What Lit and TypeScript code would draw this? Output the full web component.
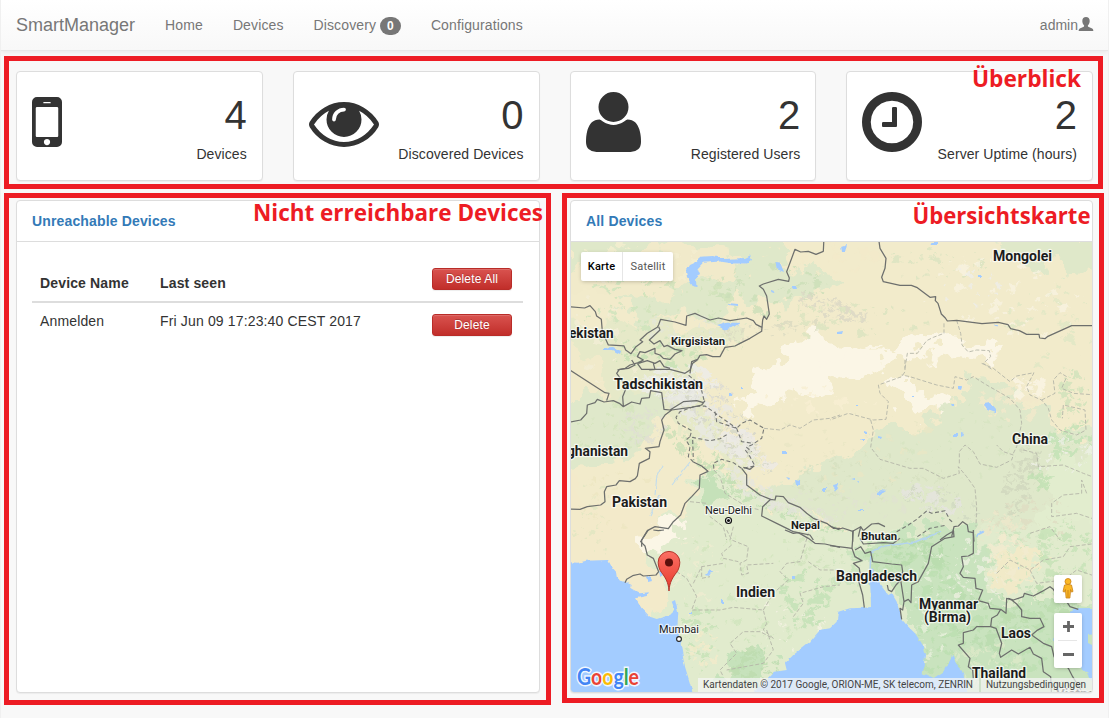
import { LitElement, html, svg, css } from "lit";
import { customElement, property } from "lit/decorators.js";

type Label = [text: string, x: number, y: number, width: number, size: number, weight: number];
type Patch = [cx: number, cy: number, rx: number, ry: number, count: number, size: number, color: string, angle?: number];

const labels: Label[] = [
  ["Mongolei", 993, 261, 59, 14, 700],
  ["ekistan", 569, 338, 44.5, 14, 700],
  ["Kirgisistan", 671, 345, 54, 11, 700],
  ["Tadschikistan", 614, 389, 89, 14, 700],
  ["ghanistan", 567, 456, 61, 14, 700],
  ["Pakistan", 612, 507, 55, 14, 700],
  ["Neu-Delhi", 705, 514, 47, 11.5, 400],
  ["Nepal", 791, 529, 29, 11, 700],
  ["China", 1012, 444, 36, 14, 700],
  ["Bhutan", 861, 540, 36, 11, 700],
  ["Bangladesch", 836, 581, 81, 14, 700],
  ["Indien", 736, 597, 39, 14, 700],
  ["Mumbai", 659, 633, 40, 11.5, 400],
  ["Myanmar", 919, 609, 59, 14, 700],
  ["(Birma)", 924, 622, 47, 14, 700],
  ["Laos", 1001, 638, 30, 14, 700],
  ["Thailand", 972, 678, 54, 14, 700],
  ["Vietnam", 1056, 698, 50, 13, 700],
];

/* Soft land cover areas, drawn under the small patches. */
const areas: [string, string][] = [
  ["#dfe8c9", "M560 230H792L786 262 760 268 745 285 730 300 720 318 690 312 660 322 640 322 622 308 600 280 560 262Z"],
  ["#f1eaca", "M560 262L600 268 630 262 660 240 700 250 745 256 735 275 690 280 660 302 620 300 560 290Z"],
  ["#dfe8c9", "M985 230H1110V268L1060 272 1020 262Z"],
  ["#dfe8c9", "M735 280L760 262 800 268 840 280 800 302 750 305Z"],
  ["#e6e9c8", "M560 325L640 320 700 330 745 318 735 340 700 350 690 380 720 420 760 460 740 480 700 440 660 410 640 430 620 440 560 440Z"],
  ["#dfe8ca", "M560 392L660 395 650 430 630 455 600 465 560 470Z"],
  ["#f1eaca", "M560 345L600 355 610 385 590 400 560 400Z"],
  ["#fbf6e6", "M735 400L752 385 745 370 775 358 800 352 830 356 852 350 880 345 900 348 885 362 862 376 840 380 812 394 790 398 760 410 745 412Z"],
  ["#fbf6e6", "M790 342L815 335 860 345 880 340 870 352 820 362 785 362Z"],
  ["#fbf6e6", "M882 383L900 378 920 378 928 392 945 400 968 412 950 422 930 412 905 405Z"],
  ["#fbf6e6", "M895 345L915 335 960 340 985 335 1000 352 960 360 930 355 905 360Z"],
  ["#dfe8ca", "M765 505L775 480 830 462 870 440 890 430 930 425 955 400 970 375 1010 390 1025 410 1050 410 1060 430 1110 440V560H960L940 530 900 535 830 525Z"],
  ["#e1ebcd", "M640 540L665 515 690 505 700 470 715 470 760 500 830 530 960 530 1110 520V705H560V650L640 640 650 560Z"],
  ["#e2edce", "M1050 460L1110 450V520L1040 530 1045 500Z"],
  ["#c9e3be", "M860 540L940 528 975 520 980 560 1000 600 1050 600 1110 605V705H920L905 600 880 575 850 560Z"],
  ["#f1eac8", "M998 545L1030 540 1045 560 1030 585 1005 590 990 570Z"],
  ["#f3eaca", "M560 480L600 500 650 500 665 520 640 545 655 575 672 600 672 612 650 618 625 600 600 600 560 600Z"],
  ["#fbf6e6", "M640 540L655 530 680 515 690 520 680 532 655 552 643 552Z"],
  ["#c5e1b9", "M700 480L712 470 720 500 708 503Z"],
  ["#c6e2bb", "M730 660L760 650 775 665 760 685 735 692 720 680Z"],
];

const patches: Patch[] = [
  [640, 262, 70, 20, 40, 5, "#f4edcf"],
  [680, 300, 70, 24, 40, 4, "#cfe2b9"],
  [615, 310, 40, 34, 40, 4, "#cde3bb"],
  [605, 335, 38, 60, 34, 5, "#f3edd6"],
  [820, 258, 60, 16, 40, 5, "#f2eac9"],
  [770, 290, 60, 28, 50, 4, "#cbdfb8"],
  [830, 308, 40, 9, 90, 3, "#d9d7c4", 18],
  [770, 330, 60, 7, 70, 3, "#d9d9c0", -8],
  [930, 265, 60, 16, 50, 3, "#d9e4c0"],
  [985, 290, 70, 34, 30, 6, "#f8f2e0"],
  [970, 285, 30, 22, 16, 4.5, "#eeede8"],
  [1050, 330, 45, 45, 36, 5, "#dfe7c4"],
  [1040, 310, 50, 30, 24, 5, "#f8f3e0"],
  [850, 320, 80, 18, 50, 3.5, "#d9e3bf"],
  [690, 328, 50, 14, 70, 3, "#e4e6d8"],
  [660, 352, 50, 16, 50, 4, "#c6e1b4"],
  [700, 345, 46, 14, 60, 3, "#d3e2bd"],
  [680, 382, 38, 18, 130, 5, "#ececea"],
  [695, 395, 36, 18, 90, 3, "#dadad4"],
  [712, 420, 50, 20, 170, 5, "#e9e8e4", 38],
  [720, 420, 50, 20, 90, 2.6, "#d3d4c9", 38],
  [745, 450, 36, 14, 100, 4, "#eceae6", 40],
  [745, 450, 36, 14, 60, 2.4, "#d3d6c6", 40],
  [645, 425, 25, 18, 90, 3, "#dedfd2"],
  [610, 430, 36, 30, 60, 3.5, "#d3e4bc"],
  [700, 455, 45, 12, 80, 3.5, "#c9e0b7", 40],
  [735, 485, 34, 10, 80, 3, "#c2deb3", 35],
  [755, 488, 34, 10, 110, 3.4, "#e6e6dd", 35],
  [800, 518, 46, 6, 70, 3, "#c2deb3", 18],
  [800, 509, 40, 8, 90, 3, "#e3e4dc", 18],
  [620, 500, 44, 28, 24, 4, "#ece6c0"],
  [595, 520, 22, 40, 30, 3, "#e0e6c0"],
  [820, 400, 60, 14, 20, 5, "#f7efd2"],
  [850, 450, 90, 40, 60, 4, "#e9e6c4"],
  [870, 480, 80, 28, 120, 2.6, "#d6e0bf"],
  [840, 505, 70, 16, 90, 3, "#e0e2d0"],
  [935, 498, 34, 13, 90, 4, "#e5e3de", 18],
  [940, 502, 40, 14, 50, 3, "#cfd8c0", 15],
  [960, 440, 60, 40, 70, 3, "#d6e3c1"],
  [1010, 400, 30, 22, 40, 5, "#f1e9cb"],
  [1030, 388, 16, 14, 14, 6, "#faf5e5"],
  [1075, 400, 18, 30, 40, 5, "#cee2ba"],
  [1022, 480, 16, 38, 130, 3, "#cfd6bd", 15],
  [1070, 440, 26, 16, 50, 5, "#c0e1b4"],
  [1045, 480, 12, 12, 16, 6, "#bfe0b2"],
  [1062, 455, 34, 20, 40, 3, "#eef0e6"],
  [1030, 520, 50, 24, 80, 3.4, "#dfdcc2"],
  [1005, 530, 28, 20, 50, 4, "#eee7cb"],
  [1020, 560, 36, 32, 60, 4, "#c9e3bb"],
  [1012, 560, 26, 24, 50, 4.5, "#f3ebd0"],
  [1065, 550, 28, 32, 80, 4.5, "#c5e2b7"],
  [735, 555, 60, 34, 45, 3, "#d2e5bd"],
  [690, 575, 30, 40, 40, 3.2, "#efecd1"],
  [740, 620, 60, 40, 60, 3.5, "#d0e5bd"],
  [700, 640, 18, 34, 45, 4.4, "#c5e2b7"],
  [705, 650, 14, 24, 20, 5, "#f2ebcb"],
  [755, 667, 24, 20, 50, 5, "#bddcaf"],
  [805, 600, 26, 30, 60, 5, "#c2e1b5"],
  [790, 620, 40, 30, 40, 2.4, "#f5f2e4"],
  [850, 572, 26, 22, 40, 4, "#c9e4bc"],
  [815, 555, 30, 18, 40, 3, "#cfe4bc"],
  [890, 555, 32, 16, 60, 4, "#bddeb0"],
  [925, 550, 30, 18, 70, 5, "#b7dbab"],
  [940, 620, 24, 60, 80, 5, "#bcdfb0"],
  [930, 600, 26, 60, 60, 2.8, "#e8f0dc"],
  [975, 575, 26, 36, 70, 3.4, "#ecefe0"],
  [985, 620, 40, 30, 70, 5, "#b9dbae"],
  [1010, 640, 40, 36, 80, 5, "#bddfb1"],
  [985, 665, 36, 22, 60, 4, "#dde9c8"],
  [1040, 610, 40, 20, 50, 5, "#bbdcae"],
];

const waters: string[] = [
  "M560 561.700L578 562.700 585 560.700 608 560 611.700 566.700 616 571.700 616.700 576.700 620 580.700 625 581.700 631.700 585 630.700 588.300 640 593.300 649 592.300 646.700 596 635 598.300 641.700 608.300 650 616.700 656.700 619 670 615 675 610 671.700 601.700 675 600 678.300 613.300 677.300 626.700 680 640 685 666.700 690 683.300 694.500 700H560Z",
  "M747 700L770 676.700 775 671.700 786.700 670 785 663.300 793.300 655 810 641.700 820 630 830 628.300 836.700 621.700 838.300 611.700 850 608.300 864.300 607.700 871 607 870.700 593.300 869.300 571 872.500 568 876.700 580 888.300 595 891.700 593.300 896.700 601.700 901.700 619.300 908.300 626.700 915 633.300 921.700 643.300 925 655 922.700 673.300 933.300 678.300 943.300 671.700 952.500 655 956 663.300 963 671 966 680 968 700Z",
  "M1105 608L1078 608.300 1070 611.700 1063 623 1053 640 1063 653 1087 673 1093 684 1105 684Z",
  "M693 286.500L687 277 686 271.700 690 265 697 261.700 700 256.700 713 256 723 259 745 258 750 255.500 752 260 747 263.500 733 263.500 720 261.500 703 262.700 697.500 268.500 700 275 696 277.500 696.500 287Z",
  "M717 326L727 322.700 740 322.700 733 327.500 725 329.500Z",
  "M775.500 262L780 262.500 784 272 776.500 269Z",
  "M791 286h5l1 3h-4zM772 290l3 1-1 2-3-1zM728 303l10 1v2l-9-1zM602 348l11-1 8 4-1 3-8-4-10 0z",
  "M841 246l6-2-2 8-3 0zM837 332l6-1-1 3-5 0zM931 242h8v2h-7zM978 275h3v2h-3zM994 325l4 0-1 2z",
  "M985 404l6-1 5 6 0 4-4-1-6-2zM958 386h4l-1 3-3-1zM954 434h4v2h-4zM961 433l3 1-1 3-2-1zM912 396h2v1h-2zM951 404h3v2h-2z",
  "M877 493l5-3 4 1-6 4-3 0zM833 488l3-4 2 0-1 4-2 3zM850 479l4-1 0 2zM857 481l3 0-1 2zM861 439h4v1l-3 0zM864 430l3 1v2h-3zM878 436l4 1-1 2-3-1zM856 404h2v2h-2zM857 510h8v1h-8z",
  "M795 480l5 1 0 4-4 0zM833 485l5-1-3 8zM823 488h3v4h-3zM786 478l4 1-1 2zM730 394h3v3h-3zM740 387h2v2h-2zM782 452h4v2h-4z",
  "M645 577l6-2 1 7-4 1zM706 575l4-5 2 1-3 5zM721 599h3v5h-3zM689 612h3v2h-3zM659 572l2-1 2 4-3 2zM792 576h2v3h-2zM1017 567l2 1-1 2z",
  "M975 537l2-4 7-4 1 2-6 3-2 3z",
];

type Trace = [x: number, y: number, d: string];
/* Outlines are traced on tiles at three units to the pixel. */
const borders: Trace[] = [
  [560, 190, "M20 350L74 354 90 347 106 365 110 378 124 388 127 425 145 465 192 468 197 480 213 491 228 470 248 455 240 450 262 430 292 412 296 404 302 388 345 396 378 406 380 378 405 370 422 378 450 390 475 384 510 392 560 384 580 392 588 403 606 412 605 424 570 445 540 460 525 468 495 472 480 500 458 500 440 494 420 496 413 508 395 515 390 550M606 412L608 390 612 378 620 388 628 372 620 318 610 298 598 288 610 282 655 268 686 274 688 264 680 245 705 178 722 186 745 184 768 193 790 184 792 140M296 410L300 420 268 450 282 462 300 452 312 470 322 466 345 478 366 482 345 492 330 508 310 505 300 495 285 490 285 475 255 488 240 485 232 500 250 510 235 518 210 525 196 535 172 540M235 520L262 512 285 520 300 512 312 530 330 535M280 520L285 538 268 540"],
  [830, 190, "M145 140L150 175 168 205 165 235 155 262 160 275 210 286 244 286 262 293 300 322 317 320 316 332 324 340 334 372 346 384 352 393 380 391 456 401 505 397 534 404 542 416 568 422 590 433 627 433 629 444 645 446 652 440 725 407 800 407"],
  [560, 360, "M20 24L135 98 147 100 140 122M20 188L62 180 80 160 82 135 105 128 112 118 132 126 160 122 178 130 190 140 215 126 240 132 245 115 268 113 272 92 305 98 312 148 330 150 370 125 410 122 430 128M435 122L425 135 395 142 370 145 335 150 315 165 305 180 312 210 300 245 297 260 256 265 270 275 268 295 238 310 232 348 226 356 210 365 178 362 168 375 140 380 133 395 135 425 122 435 82 440 60 448 20 447M190 138L188 110 200 80 170 40 178 28 205 25 225 15 215 0M232 10L245 28 300 28 330 28 375 40 390 30 398 10 412 0M245 560L245 540 262 512 285 500 325 506 340 485 362 465 375 430 395 410 418 385 420 345 444 334 425 318 400 306M545 325L560 345 560 375 600 405 632 418 608 440 605 468 650 490 700 515 725 520 750 525 760 540M632 418L645 420 648 408 670 410 685 428 720 442 740 460 760 475 800 490 820 505 840 505M550 322L570 328 582 318"],
  [830, 360, "M0 498L25 508 38 504 68 514 92 500 100 512 125 492 145 490 165 500 M68 514V545M92 500L85 530M365 530L372 500 385 498 398 485 412 495 415 515 430 518 432 545M372 512L350 525 330 540"],
  [560, 530, "M265 0L242 35 255 48 262 75 280 85 296 125 288 135 250 138 240 132 218 137 200 148 195 158M280 0L295 2 312 0M675 0L700 10 715 8 745 25 765 40 795 42 840 52"],
  [830, 530, "M0 47L50 53 66 55 70 0M90 25L100 42 160 38 190 40 210 25M66 55L75 80 96 92 70 100 88 115 90 130 85 150 98 195 103 233M75 60L92 50 105 70 122 65 128 95 185 102 215 105 218 125 212 150M172 165L175 180 185 185 198 165 212 150 222 215 235 208 243 218 245 165 265 155 270 145 295 100 305 50 345 25 372 20 370 0M222 215L218 240 210 235 215 268M430 0L430 70 415 78 395 80 400 110 390 130 400 142 435 145 438 175 458 180 445 212 475 220 480 235 512 238 502 255 485 265 482 290 440 290 430 300 400 308 400 340 385 345 420 385 415 410 428 420 430 445M512 238L528 250 530 205 545 210 560 222 575 240 575 260 600 265 630 265 642 290 620 302 605 315 640 340 665 350 672 380 715 415 728 440 765 500M535 205L550 210 580 200 583 190 610 198 635 185 660 170 670 178 680 195 710 215 720 230 745 238M482 290L498 295 515 340 508 370 512 382 545 360 565 372 600 352 610 372 635 385 640 425 662 440 665 500"],
];

const disputed: Trace[] = [
  [560, 360, "M432 120L425 92 405 62 385 45M400 306L385 290 390 260 378 240 390 230 410 235 450 242 480 236 500 224M390 230L395 212 355 190 348 172 360 155 400 140 435 138 460 155 480 170 530 205 M465 155L470 185 530 205 545 190 570 180 612 205 605 235 575 255 560 262 575 275M530 205L545 245 580 250M556 270L570 290 585 318 545 325 520 308 485 298 460 310 462 330M398 240L400 300"],
  [830, 360, "M200 515L235 495 260 478 290 453 305 460 345 452 360 480 372 490M262 530L300 505 350 495"],
];

const provinces: Trace[] = [
  [830, 190, "M342 400L342 430 310 442 290 452 262 490 232 490 224 540M380 391L392 430 396 465 415 486 440 480 478 482 482 500 460 520 488 540"],
  [560, 360, "M612 205L660 210 690 195 720 205 760 180 810 175 840 165M462 330L480 350 495 400 560 440 600 450M390 425L440 430 450 470 490 500 500 540M520 500L510 540"],
  [830, 360, "M225 0L225 35 215 50 145 75 150 100 175 125 168 178 130 180 55 160 0 180M122 180L130 210 122 262 150 298 240 325 280 325 340 355 388 340 385 320 410 350 435 385 440 440 438 500M388 310L388 275 405 255 430 275 450 312 500 322 545 300 550 285 520 275 500 255M550 280L560 260 575 190 570 150 540 115 470 75 430 50 410 60 375 50 370 85 320 75 240 50 215 45M455 10L490 25 540 65 560 48 612 38 590 80 600 105 635 120 655 145 665 180 690 210 740 225 768 210 765 150 700 135 697 175M635 120L675 100 670 60 690 38 710 50 695 85 730 100 800 105M580 270L620 280 625 320 700 315 760 340 800 355M770 400L755 360 755 400 700 405 665 430 665 470 740 460 800 480M600 520L660 500 690 540"],
  [560, 530, "M500 0L515 30 565 50 560 90 540 100 545 135 565 130 560 105 640 100M515 45L485 70 490 85 535 95M350 125L380 145 400 180 410 200 395 240 480 240 520 232 610 240 620 280 610 300 640 325 600 305 550 305 510 340 530 370 480 420 490 440M610 240L640 190 685 150 660 125 680 100 720 95 745 10M400 160L425 110 490 100M425 110V145L450 140M620 300L640 360 610 400 500 420M745 95L780 120 830 120M700 260L730 220 720 190 790 170 840 165"],
  [830, 530, "M500 130L540 90 600 120 640 90 700 80 720 50 800 40M600 120L620 160 700 150 740 120 800 140"],
];

/* Small deterministic generator so that the terrain is the same on every load. */
function randomFrom(seed: number) {
  let s = seed;
  return () => {
    s = (s * 1664525 + 1013904223) >>> 0;
    return s / 4294967296;
  };
}

function patchPath([cx, cy, rx, ry, count, size, , angle = 0]: Patch, seed: number): string {
  const rnd = randomFrom(seed * 7919 + 17);
  const a = (angle * Math.PI) / 180;
  let d = "";
  for (let i = 0; i < count; i++) {
    const t = rnd() * Math.PI * 2;
    const r = Math.sqrt(rnd());
    const ex = Math.cos(t) * r * rx;
    const ey = Math.sin(t) * r * ry;
    const x = cx + ex * Math.cos(a) - ey * Math.sin(a);
    const y = cy + ex * Math.sin(a) + ey * Math.cos(a);
    const scale = size * (0.2 + rnd() * rnd() * 1.3);
    const points: string[] = [];
    for (let k = 0; k < 7; k++) {
      const u = (k / 7) * Math.PI * 2;
      const q = scale * (0.3 + rnd() * 0.9);
      points.push(`${(x + Math.cos(u) * q * 1.2).toFixed(1)} ${(y + Math.sin(u) * q * 0.9).toFixed(1)}`);
    }
    d += `M${points.join("L")}Z`;
  }
  return d;
}

const traces = (items: Trace[], name: string) =>
  items.map(([x, y, d]) => svg`<path class=${name} transform="translate(${x} ${y}) scale(.33333)" d=${d}></path>`);

/* Roughens the outlines of whatever it is applied to. */
const roughen = (id: string, frequency: number, scale: number, octaves: number) => svg`
  <filter id=${id} filterUnits="userSpaceOnUse" x="560" y="230" width="545" height="475" color-interpolation-filters="sRGB">
    <feTurbulence type="fractalNoise" baseFrequency=${frequency} numOctaves=${octaves} seed="4" result="noise"></feTurbulence>
    <feDisplacementMap in="SourceGraphic" in2="noise" scale=${scale} xChannelSelector="R" yChannelSelector="G"></feDisplacementMap>
  </filter>`;

@customElement("device-map")
class DeviceMap extends LitElement {
  static styles = css`
    :host { display: block; position: relative; overflow: hidden; height: 450px; font-family: Roboto, sans-serif; }
    .terrain { display: block; width: 100%; height: 100%; }
    .border, .disputed, .province { fill: none; vector-effect: non-scaling-stroke; stroke-linejoin: round; }
    .border { stroke: #6d6f6d; stroke-width: 1.25; }
    .disputed { stroke: #777976; stroke-width: 1.1; stroke-dasharray: 4 2.5; }
    .province { stroke: #b4b5a8; stroke-width: .9; stroke-dasharray: 4 2; }
    .label { fill: #1c1c1c; stroke: #fff; stroke-opacity: .7; stroke-width: 2.4px; paint-order: stroke; stroke-linejoin: round; }
    .logo { font-size: 22px; font-weight: 700; stroke: #fff; stroke-opacity: .85; stroke-width: 3px; paint-order: stroke; font-family: Lato, sans-serif; }
    .types { position: absolute; left: 10px; top: 10px; display: flex; height: 29px; line-height: 29px; font-size: 11px; background: #fff; border-radius: 2px; box-shadow: 0 1px 4px -1px rgba(0,0,0,.3); }
    .type { box-sizing: border-box; width: 50px; text-align: center; color: #565656; letter-spacing: .15px; }
    .type.active { width: 42px; color: #000; font-weight: 500; border-right: 1px solid #e6e6e6; }
    .controls { position: absolute; right: 10px; bottom: 24px; display: flex; flex-direction: column; gap: 10px; width: 28px; }
    .control { display: flex; flex-direction: column; align-items: center; background: #fff; border-radius: 2px; box-shadow: 0 1px 4px -1px rgba(0,0,0,.3); }
    .control svg { display: block; }
    .legal { position: absolute; right: 0; bottom: 0; display: flex; height: 14px; background: rgba(245,245,245,.72); }
    .legal svg { display: block; font-size: 10px; fill: #444; }
  `;

  render() {
    return html`
      <svg class="terrain" viewBox="571 242 521 450">
        <defs>
          <linearGradient id="pin" x1="0" y1="0" x2="0" y2="1">
            <stop offset="0" stop-color="#fb7064"></stop><stop offset="1" stop-color="#e8382c"></stop>
          </linearGradient>
          ${roughen("coarse", 0.045, 44, 4)} ${roughen("medium", 0.12, 9, 3)} ${roughen("fine", 0.14, 4, 2)}
        </defs>
        <rect x="560" y="230" width="545" height="475" fill="#f2ebcb"></rect>
        <g filter="url(#coarse)">${areas.map(([fill, d]) => svg`<path fill=${fill} d=${d}></path>`)}</g>
        <g filter="url(#medium)">${patches.map((p, i) => svg`<path fill=${p[6]} fill-opacity=".8" d=${patchPath(p, i + 1)}></path>`)}</g>
        <g filter="url(#fine)">
          ${waters.map((d) => svg`<path fill="#a3ccff" d=${d}></path>`)}
          <path d="M870 572L871 552 885 546 915 542 940 532" fill="none" stroke="#b4d4ee" stroke-width="1.600"></path>
          <path d="M655 495L657 475 662 465M672 485L690 462M650 516L660 495" fill="none" stroke="#c2dcec" stroke-width="1.100"></path>
          <path d="M1088 634l8-1v14l-8-4z" fill="#c9e3be"></path>
        </g>
        ${traces(provinces, "province")} ${traces(disputed, "disputed")} ${traces(borders, "border")}
        ${labels.map(([text, x, y, width, size, weight]) => svg`<text class="label" x=${x} y=${y} textLength=${width}
          lengthAdjust="spacingAndGlyphs" font-size=${size} font-weight=${weight}>${text}</text>`)}
        <circle cx="728.500" cy="520.500" r="3" fill="#fff" stroke="#111" stroke-width="1.200"></circle>
        <circle cx="728.500" cy="520.500" r="1.500" fill="#111"></circle>
        <circle cx="679" cy="639" r="2.400" fill="#fff" stroke="#222" stroke-width="1.100"></circle>
        <path d="M669 591C668.500 582 665 577 661.500 572.500 659.500 570 658.200 566 658.200 562.200a10.800 10.800 0 0 1 21.600 0C679.800 566 678.500 570 676.500 572.500 673 577 669.500 582 669 591Z" fill="url(#pin)" stroke="#b3352b" stroke-width="1"></path>
        <circle cx="669" cy="562.500" r="4" fill="#5c100c"></circle>
        <text class="logo" x="577" y="685" textLength="62" lengthAdjust="spacingAndGlyphs"><tspan fill="#4285f4">G</tspan><tspan fill="#ea4335">o</tspan><tspan fill="#fbbc05">o</tspan><tspan fill="#4285f4">g</tspan><tspan fill="#34a853">l</tspan><tspan fill="#ea4335">e</tspan></text>
      </svg>
      <div class="types"><div class="type active">Karte</div><div class="type">Satellit</div></div>
      <div class="controls">
        <div class="control">
          <svg width="28" height="28" viewBox="0 0 28 28">
            <path d="M10.500 10q3.500-1.200 7 0l1.500 6.500-1.500.6-.9-2.600-.7 8.500h-3.800l-.7-8.500-.9 2.600-1.500-.6Z" fill="#fbb825" stroke="#c98014" stroke-width=".8"></path>
            <path d="M14 15v7.500" stroke="#c98014" stroke-width=".9"></path>
            <circle cx="14" cy="6.500" r="3" fill="#fbb825" stroke="#c98014" stroke-width=".8"></circle>
          </svg>
        </div>
        <div class="control">
          <svg width="28" height="55" viewBox="0 0 28 55">
            <path d="M9 13.500h11M14.500 8v11M9 41.500h11" stroke="#666" stroke-width="2.800"></path>
            <path d="M4 27.500h19" stroke="#e6e6e6"></path>
          </svg>
        </div>
      </div>
      <div class="legal">
        <svg width="394" height="14" viewBox="698 0 394 14">
          <text x="703" y="10" textLength="270" lengthAdjust="spacingAndGlyphs">Kartendaten © 2017 Google, ORION-ME, SK telecom, ZENRIN</text>
          <path d="M980 0v14" stroke="#a8c9a0" stroke-opacity=".8"></path>
          <text x="986" y="10" textLength="100" lengthAdjust="spacingAndGlyphs">Nutzungsbedingungen</text>
        </svg>
      </div>`;
  }
}

const icons = {
  mobile: { box: "512 0 768 1792", width: 30, d: "M976 1408q0-33-23.500-56.500t-56.500-23.500-56.500 23.500-23.500 56.500 23.500 56.500 56.500 23.500 56.500-23.500 23.500-56.500zm208-160v-704q0-13-9.500-22.500t-22.500-9.500h-512q-13 0-22.500 9.500t-9.500 22.500v704q0 13 9.500 22.500t22.500 9.500h512q13 0 22.500-9.500t9.500-22.500zm-192-848q0-16-16-16h-160q-16 0-16 16t16 16h160q16 0 16-16zm288-16v1024q0 52-38 90t-90 38h-512q-52 0-90-38t-38-90v-1024q0-52 38-90t90-38h512q52 0 90 38t38 90z" },
  eye: { box: "0 0 1792 1792", width: 70, d: "M1664 960q-152-236-381-353 61 104 61 225 0 185-131.500 316.500t-316.500 131.500-316.500-131.500-131.500-316.500q0-121 61-225-229 117-381 353 133 205 333.500 326.500t434.500 121.500 434.500-121.500 333.500-326.500zm-720-384q0-20-14-34t-34-14q-125 0-214.500 89.500t-89.500 214.500q0 20 14 34t34 14 34-14 14-34q0-86 61-147t147-61q20 0 34-14t14-34zm848 384q0 34-20 69-140 230-376.500 368.500t-499.500 138.500-499.500-139-376.500-368q-20-35-20-69t20-69q140-229 376.500-368t499.500-139 499.500 139 376.500 368q20 35 20 69z" },
  user: { box: "0 0 1408 1792", width: 55, d: "M1408 1405q0 120-73 189.500t-194 69.500H267q-121 0-194-69.500T0 1405q0-53 3.500-103.500t14-109T44 1084t43-97.500 62-81 85.500-53.500T346 832q9 0 42 21.500t74.500 48 108 48T704 971t133.500-21.500 108-48 74.500-48 42-21.500q61 0 111.500 20t85.500 53.500 62 81 43 97.500 26.500 108.500 14 109 3.500 103.500zm-320-893q0 159-112.500 271.500T704 896 432.500 783.500 320 512t112.500-271.500T704 128t271.500 112.500T1088 512z" },
  clock: { box: "128 0 1536 1792", width: 60, d: "M1024 544v448q0 14-9 23t-23 9h-320q-14 0-23-9t-9-23v-64q0-14 9-23t23-9h224v-352q0-14 9-23t23-9h64q14 0 23 9t9 23zm416 352q0-148-73-273t-198-198-273-73-273 73-198 198-73 273 73 273 198 198 273 73 273-73 198-198 73-273zm224 0q0 209-103 385.500t-279.500 279.500-385.500 103-385.500-103-279.500-279.500-103-385.500 103-385.500 279.500-279.500 385.500-103 385.500 103 279.500 279.500 103 385.500z" },
};

@customElement("stat-card")
class StatCard extends LitElement {
  @property() icon: keyof typeof icons = "mobile";
  @property() value = "";
  @property() label = "";

  static styles = css`
    :host { box-sizing: border-box; display: flex; justify-content: space-between; height: 109.5px; padding: 15px; border: 1px solid #ddd; border-radius: 4px; background: #fff; box-shadow: 0 1px 1px rgba(0,0,0,.05); }
    .icon { display: block; flex: none; fill: #333; }
    .text { text-align: right; white-space: nowrap; }
    .value { height: 57px; font-size: 40px; line-height: 57px; }
    .label { line-height: 20px; letter-spacing: .08px; }
  `;

  render() {
    const icon = icons[this.icon];
    return html`
      <svg class="icon" width=${icon.width} height="70" viewBox=${icon.box}><path d=${icon.d}></path></svg>
      <div class="text"><div class="value">${this.value}</div><div class="label">${this.label}</div></div>`;
  }
}

@customElement("app-root")
class AppRoot extends LitElement {
  static styles = css`
    :host { display: block; position: relative; box-sizing: border-box; height: 718px; overflow: hidden; border: solid #f0f0f0; border-width: 0 1px; background: #f8f8f8; color: #333; font: 14px/20px "Liberation Sans", Arial, sans-serif; }
    .navbar { box-sizing: border-box; display: flex; height: 51px; padding: 0 14px 0 15px; color: #777; background: linear-gradient(#fff, #f8f8f8); border-bottom: 1px solid #e7e7e7; box-shadow: 0 1px 5px rgba(0,0,0,.075); }
    .brand { padding: 15px 15px 15px 0; font-size: 18px; }
    .item { padding: 15px; letter-spacing: .12px; }
    .badge { display: inline-block; padding: 3px 7px; border-radius: 10px; background: #777; color: #fff; font-size: 12px; font-weight: 700; line-height: 12px; }
    .account { display: flex; margin-left: auto; padding-top: 15px; }
    .account svg { margin-top: 2px; fill: #777; }
    .stats { display: grid; grid-template-columns: repeat(4, 1fr); gap: 30px; padding: 20px 15px 0; }
    .panels { display: grid; grid-template-columns: 524px 523px; gap: 30px; padding: 19.5px 15px 0; }
    .panel { box-sizing: border-box; height: 493px; overflow: hidden; border: 1px solid #ddd; border-radius: 4px; background: #fff; box-shadow: 0 1px 1px rgba(0,0,0,.05); }
    .heading { height: 20px; padding: 10px 15px; border-bottom: 1px solid #ddd; color: #337ab7; font-weight: 700; letter-spacing: .15px; }
    .table { margin: 15px 16px 0 15px; letter-spacing: .15px; }
    .row { display: grid; grid-template-columns: 120px 1fr 91px; padding-left: 8px; }
    .row.head { height: 44px; border-bottom: 2px solid #ddd; font-weight: 700; }
    .row > span { padding-top: 8px; }
    .row.head > span { padding-top: 16px; }
    .button { box-sizing: border-box; width: 80px; height: 22px; margin: 11px 0 0; padding: 0; border: 1px solid #b92c28; border-radius: 3px; background: linear-gradient(#d9534f, #c12e2a); box-shadow: inset 0 1px 0 rgba(255,255,255,.15), 0 1px 1px rgba(0,0,0,.075); color: #fff; font: 12px/18px "Liberation Sans", Arial, sans-serif; letter-spacing: .15px; text-shadow: 0 -1px 0 rgba(0,0,0,.2); }
    .frame { position: absolute; box-sizing: border-box; border: 5px solid #ed1c24; pointer-events: none; }
    .overview { left: 3px; top: 56px; width: 1099px; height: 133px; }
    .unreachable { left: 3px; top: 193px; width: 547px; height: 512px; }
    .mapframe { left: 561px; top: 193px; width: 542px; height: 510px; }
    .notes { position: absolute; left: -1px; top: 0; pointer-events: none; fill: #ed1c24; font: 700 24px "Open Sans", sans-serif; }
  `;

  render() {
    return html`
      <nav class="navbar">
        <div class="brand">SmartManager</div>
        <div class="item">Home</div>
        <div class="item">Devices</div>
        <div class="item">Discovery <span class="badge">0</span></div>
        <div class="item">Configurations</div>
        <div class="account">admin<svg width="16" height="14" viewBox="0 0 16 14"><path d="M8 0c2.300 0 3.700 1.600 3.700 4 0 1.700-.8 3.300-1.700 4.200-.4.800-.1 1.500.8 1.900l3.400 1.500c.8.4 1.100 1.200 1.100 2.400H.7c0-1.200.3-2 1.100-2.400l3.400-1.500c.9-.4 1.200-1.100.8-1.900C5.100 7.300 4.300 5.700 4.300 4 4.300 1.600 5.700 0 8 0Z"></path></svg></div>
      </nav>
      <section class="stats">
        <stat-card icon="mobile" value="4" label="Devices"></stat-card>
        <stat-card icon="eye" value="0" label="Discovered Devices"></stat-card>
        <stat-card icon="user" value="2" label="Registered Users"></stat-card>
        <stat-card icon="clock" value="2" label="Server Uptime (hours)"></stat-card>
      </section>
      <section class="panels">
        <div class="panel">
          <div class="heading">Unreachable Devices</div>
          <div class="table">
            <div class="row head"><span>Device Name</span><span>Last seen</span><button class="button">Delete All</button></div>
            <div class="row"><span>Anmelden</span><span>Fri Jun 09 17:23:40 CEST 2017</span><button class="button">Delete</button></div>
          </div>
        </div>
        <div class="panel">
          <div class="heading">All Devices</div>
          <device-map></device-map>
        </div>
      </section>
      <div class="frame overview"></div>
      <div class="frame unreachable"></div>
      <div class="frame mapframe"></div>
      <svg class="notes" width="1109" height="240" viewBox="0 0 1109 240">
        <text x="972" y="87" textLength="109" lengthAdjust="spacingAndGlyphs">Überblick</text>
        <text x="253" y="221" textLength="290" lengthAdjust="spacingAndGlyphs">Nicht erreichbare Devices</text>
        <text x="912.500" y="224" textLength="178" lengthAdjust="spacingAndGlyphs">Übersichtskarte</text>
      </svg>`;
  }
}
